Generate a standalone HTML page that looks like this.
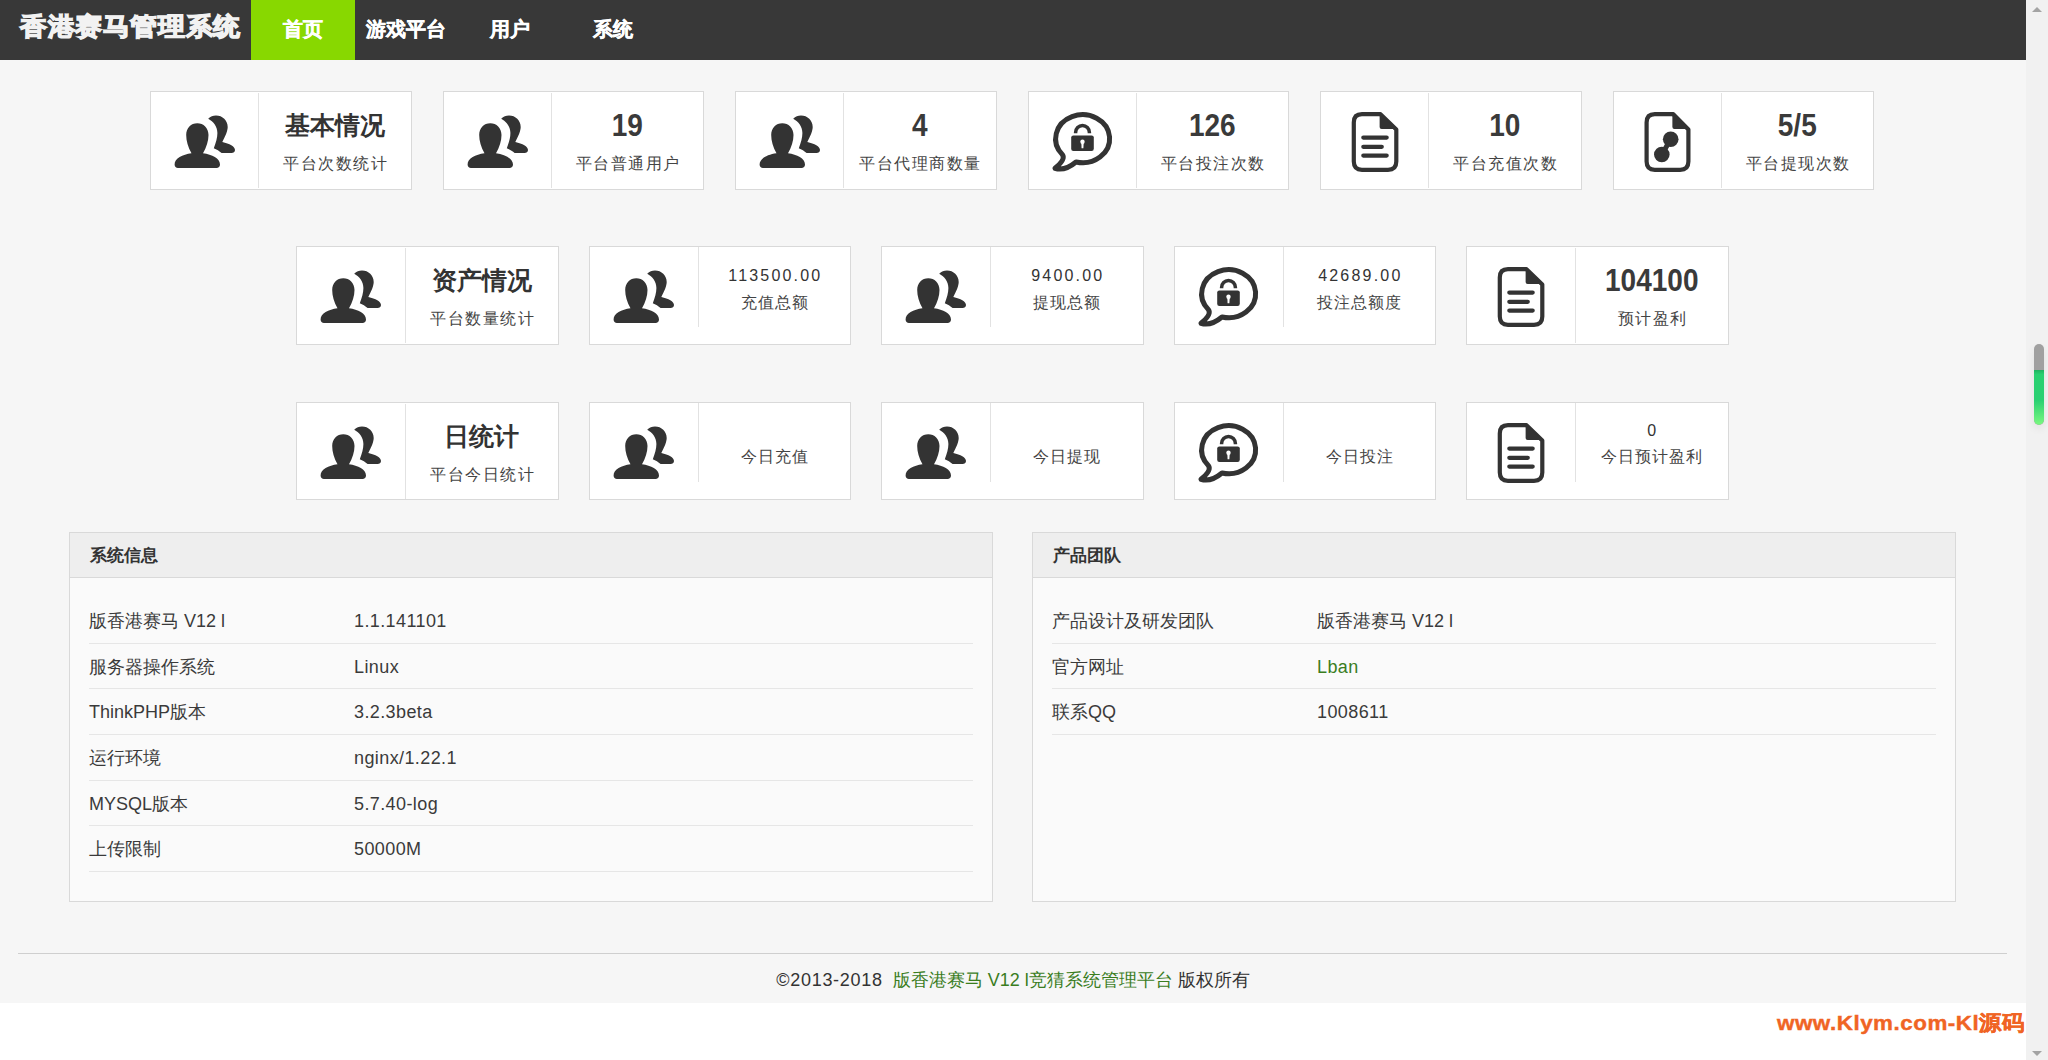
<!DOCTYPE html>
<html><head><meta charset="utf-8">
<style>
*{box-sizing:border-box;margin:0;padding:0}
html,body{width:2048px;height:1060px;overflow:hidden;background:#fff;font-family:"Liberation Sans",sans-serif;color:#333}
#page{position:absolute;left:0;top:0;width:2026px;height:1003px;background:#f6f6f6}
#nav{position:absolute;left:0;top:0;width:2026px;height:60px;background:#383838}
#logo{position:absolute;left:20px;top:6px;font-size:27px;font-weight:900;color:#f0f0f0;letter-spacing:0.6px;line-height:40px;white-space:nowrap;transform:scaleY(0.93);transform-origin:0 30px;-webkit-text-stroke:1.3px #f2f2f2}
.ni{position:absolute;top:0;height:60px;width:104px;text-align:center;line-height:58px;font-size:20px;font-weight:bold;color:#fff;-webkit-text-stroke:0.4px #fff}
.card{position:absolute;width:261.5px;background:#fff;border:1px solid #d9d9d9}
.card .ic{position:absolute;left:14px;top:13px;width:75px;height:75px}
.card .sep{position:absolute;left:107px;top:1px;width:1px;height:95px;background:#e2e2e2}
.card .sep.s{top:0;height:80px}
.card .tx{position:absolute;left:108px;right:0;text-align:center;white-space:nowrap}
.t1{top:17.5px;font-size:25px;font-weight:bold;line-height:30px;color:#333}
.n1{top:18px;font-size:28px;font-weight:bold;line-height:30px;color:#333;transform:scaleY(1.09);color:#3a3a3a;transform-origin:50% 4px}
.st{top:60px;font-size:16px;line-height:24px;letter-spacing:1.5px;color:#444;padding-left:1.5px}
.n2{top:19px;font-size:16px;line-height:20px;letter-spacing:2.2px;color:#333;padding-left:2.2px}
.l2{top:44px;font-size:16px;line-height:24px;letter-spacing:1px;color:#444;padding-left:1px}
.panel{position:absolute;top:532px;width:924px;height:370px;border:1px solid #d9d9d9;background:#fafafa}
.ph{position:absolute;left:0;top:0;width:100%;height:45px;background:#eee;border-bottom:1px solid #d9d9d9;font-size:17.2px;font-weight:bold;line-height:45px;padding-left:20px;color:#333}
.row{position:absolute;left:19px;width:884px;height:45.68px;border-bottom:1px solid #e6e6e6;font-size:18px;line-height:46px;color:#3a3a3a;white-space:nowrap}
.row .v{position:absolute;left:265px;top:0}
a{color:#3a7d1e;text-decoration:none}
#hr{position:absolute;left:18px;top:953px;width:1989px;height:1px;background:#cfcfcf}
#foot{position:absolute;left:0;top:966px;width:2026px;text-align:center;font-size:18px;line-height:28px;color:#333;white-space:nowrap}
#wm{position:absolute;left:1777px;top:1008px;font-size:21px;font-weight:bold;color:#f06424;white-space:nowrap;line-height:30px;letter-spacing:0.5px;transform:scaleX(1.065);transform-origin:0 0;-webkit-text-stroke:0.4px #f06424}
#sb{position:absolute;left:2026px;top:0;width:22px;height:1060px;background:#f1f1f1}
#up{position:absolute;left:6px;top:7px;width:0;height:0;border-left:5px solid transparent;border-right:5px solid transparent;border-bottom:5px solid #a3a3a3}
#dn{position:absolute;left:6px;top:1051px;width:0;height:0;border-left:5px solid transparent;border-right:5px solid transparent;border-top:5px solid #a3a3a3}
#th{position:absolute;left:8px;top:344px;width:10px;height:81px;border-radius:5px;background:#a0a0a0;overflow:hidden;box-shadow:0 4px 8px rgba(0,0,0,0.07)}
#thg{position:absolute;left:0;top:26px;width:10px;height:55px;background:linear-gradient(#1fb060,#28d070 8%,#2ad072 55%,#7af880);border-radius:0 0 5px 5px}

.r3 .n2{top:18px}.r3 .l2{top:42px}
.r3 .sep.s{height:79px}

.r2 .sep{left:108px}.r2 .tx{left:109px}

</style></head><body>
<div id="page">
<div id="nav">
<div id="logo">香港赛马管理系统</div>
<div class="ni" style="left:251px;background:#88d800">首页</div>
<div class="ni" style="left:354px">游戏平台</div>
<div class="ni" style="left:458px">用户</div>
<div class="ni" style="left:561px">系统</div>
</div>
<div class="card " style="left:150.0px;top:91px;height:99px;width:261.5px"><svg class="ic" viewBox="0 0 75 75"><path fill="#333" d="M26.5,48.3C23,42 21.2,36 21.2,30C21.2,23 26,18.3 32.3,18.3C38.5,18.3 43.5,23 43.5,30C43.5,36 41.5,42 38,48.3C47,49.5 55,53.5 55,59.5C55,61.5 53.5,63 51.5,63L13,63C11,63 9.6,61.5 9.6,59.5C9.6,53.5 17.5,49.5 26.5,48.3Z"/><path fill="#333" d="M43.2,13.8C45.5,11.8 48,10.6 51,10.6C57.5,10.6 62.7,15.5 62.7,22C62.7,26 60,32 57.3,37C64.5,38.5 70,41.5 70,45C70,46.8 68.5,48.1 66.5,48.1L56.6,48.1C54.5,46 51.5,44.2 48.8,43.2C51,37 52.4,33 52.4,28C52.4,22 48.5,16.5 43.2,13.8Z"/></svg><div class="sep"></div><div class="tx t1">基本情况</div><div class="tx st">平台次数统计</div></div><div class="card " style="left:442.5px;top:91px;height:99px;width:261.5px"><svg class="ic" viewBox="0 0 75 75"><path fill="#333" d="M26.5,48.3C23,42 21.2,36 21.2,30C21.2,23 26,18.3 32.3,18.3C38.5,18.3 43.5,23 43.5,30C43.5,36 41.5,42 38,48.3C47,49.5 55,53.5 55,59.5C55,61.5 53.5,63 51.5,63L13,63C11,63 9.6,61.5 9.6,59.5C9.6,53.5 17.5,49.5 26.5,48.3Z"/><path fill="#333" d="M43.2,13.8C45.5,11.8 48,10.6 51,10.6C57.5,10.6 62.7,15.5 62.7,22C62.7,26 60,32 57.3,37C64.5,38.5 70,41.5 70,45C70,46.8 68.5,48.1 66.5,48.1L56.6,48.1C54.5,46 51.5,44.2 48.8,43.2C51,37 52.4,33 52.4,28C52.4,22 48.5,16.5 43.2,13.8Z"/></svg><div class="sep"></div><div class="tx n1">19</div><div class="tx st">平台普通用户</div></div><div class="card " style="left:735.0px;top:91px;height:99px;width:261.5px"><svg class="ic" viewBox="0 0 75 75"><path fill="#333" d="M26.5,48.3C23,42 21.2,36 21.2,30C21.2,23 26,18.3 32.3,18.3C38.5,18.3 43.5,23 43.5,30C43.5,36 41.5,42 38,48.3C47,49.5 55,53.5 55,59.5C55,61.5 53.5,63 51.5,63L13,63C11,63 9.6,61.5 9.6,59.5C9.6,53.5 17.5,49.5 26.5,48.3Z"/><path fill="#333" d="M43.2,13.8C45.5,11.8 48,10.6 51,10.6C57.5,10.6 62.7,15.5 62.7,22C62.7,26 60,32 57.3,37C64.5,38.5 70,41.5 70,45C70,46.8 68.5,48.1 66.5,48.1L56.6,48.1C54.5,46 51.5,44.2 48.8,43.2C51,37 52.4,33 52.4,28C52.4,22 48.5,16.5 43.2,13.8Z"/></svg><div class="sep"></div><div class="tx n1">4</div><div class="tx st">平台代理商数量</div></div><div class="card " style="left:1027.5px;top:91px;height:99px;width:261.5px"><svg class="ic" style="left:16.5px" viewBox="0 0 75 75"><path fill="none" stroke="#333" stroke-width="5" stroke-linejoin="round" stroke-linecap="round" d="M31,57A27,24 0 1 0 17.5,49.72C19.8,53 17,57.5 10,63.3C17,65.6 25,62 31,57Z"/><rect x="26.2" y="30.4" width="22.6" height="15.6" rx="2.2" fill="#333"/><path fill="none" stroke="#333" stroke-width="3.5" d="M30.6,28.3V27.4A6.9,6.9 0 0 1 44.4,27.4V28.3"/><circle cx="37.5" cy="36.8" r="2.2" fill="#fff"/><path fill="#fff" d="M36.3,37.5L38.7,37.5L38.4,43.2L36.6,43.2Z"/></svg><div class="sep"></div><div class="tx n1">126</div><div class="tx st">平台投注次数</div></div><div class="card " style="left:1320.0px;top:91px;height:99px;width:261.5px"><svg class="ic" style="left:19px" viewBox="0 0 75 75"><path fill="none" stroke="#333" stroke-width="4.2" stroke-linejoin="round" d="M13.8,17.5Q13.8,9.2 22,9.2L40.5,9.2L56.3,24.5L56.3,56.5Q56.3,64.8 48,64.8L22,64.8Q13.8,64.8 13.8,56.5Z"/><path fill="#333" d="M39.6,9.2L39.6,22Q39.6,24 41.6,24L56.3,24Z"/><path stroke="#333" stroke-width="4.2" stroke-linecap="round" d="M23.3,32.6H46.7M23.3,41.8H41.8M23.3,50.6H46.7"/></svg><div class="sep"></div><div class="tx n1">10</div><div class="tx st">平台充值次数</div></div><div class="card " style="left:1612.5px;top:91px;height:99px;width:261.5px"><svg class="ic" style="left:16.5px" viewBox="0 0 75 75"><path fill="none" stroke="#333" stroke-width="4.2" stroke-linejoin="round" d="M16.6,17.5Q16.6,9.2 24.8,9.2L43.3,9.2L58.4,24.5L58.4,56.5Q58.4,64.8 50.1,64.8L24.8,64.8Q16.6,64.8 16.6,56.5Z"/><path fill="#333" d="M42.4,9.2L42.4,22Q42.4,24 44.4,24L58.4,24Z"/><circle cx="40.7" cy="34.3" r="7.8" fill="#333"/><circle cx="31.8" cy="49.5" r="7.8" fill="#333"/><path stroke="#333" stroke-width="5" d="M40.7,34.3L31.8,49.5"/></svg><div class="sep"></div><div class="tx n1">5/5</div><div class="tx st">平台提现次数</div></div><div class="card r2" style="left:296.0px;top:246px;height:99px;width:262.5px"><svg class="ic" viewBox="0 0 75 75"><path fill="#333" d="M26.5,48.3C23,42 21.2,36 21.2,30C21.2,23 26,18.3 32.3,18.3C38.5,18.3 43.5,23 43.5,30C43.5,36 41.5,42 38,48.3C47,49.5 55,53.5 55,59.5C55,61.5 53.5,63 51.5,63L13,63C11,63 9.6,61.5 9.6,59.5C9.6,53.5 17.5,49.5 26.5,48.3Z"/><path fill="#333" d="M43.2,13.8C45.5,11.8 48,10.6 51,10.6C57.5,10.6 62.7,15.5 62.7,22C62.7,26 60,32 57.3,37C64.5,38.5 70,41.5 70,45C70,46.8 68.5,48.1 66.5,48.1L56.6,48.1C54.5,46 51.5,44.2 48.8,43.2C51,37 52.4,33 52.4,28C52.4,22 48.5,16.5 43.2,13.8Z"/></svg><div class="sep"></div><div class="tx t1">资产情况</div><div class="tx st">平台数量统计</div></div><div class="card r2" style="left:588.5px;top:246px;height:99px;width:262.5px"><svg class="ic" viewBox="0 0 75 75"><path fill="#333" d="M26.5,48.3C23,42 21.2,36 21.2,30C21.2,23 26,18.3 32.3,18.3C38.5,18.3 43.5,23 43.5,30C43.5,36 41.5,42 38,48.3C47,49.5 55,53.5 55,59.5C55,61.5 53.5,63 51.5,63L13,63C11,63 9.6,61.5 9.6,59.5C9.6,53.5 17.5,49.5 26.5,48.3Z"/><path fill="#333" d="M43.2,13.8C45.5,11.8 48,10.6 51,10.6C57.5,10.6 62.7,15.5 62.7,22C62.7,26 60,32 57.3,37C64.5,38.5 70,41.5 70,45C70,46.8 68.5,48.1 66.5,48.1L56.6,48.1C54.5,46 51.5,44.2 48.8,43.2C51,37 52.4,33 52.4,28C52.4,22 48.5,16.5 43.2,13.8Z"/></svg><div class="sep s"></div><div class="tx n2">113500.00</div><div class="tx l2">充值总额</div></div><div class="card r2" style="left:881.0px;top:246px;height:99px;width:262.5px"><svg class="ic" viewBox="0 0 75 75"><path fill="#333" d="M26.5,48.3C23,42 21.2,36 21.2,30C21.2,23 26,18.3 32.3,18.3C38.5,18.3 43.5,23 43.5,30C43.5,36 41.5,42 38,48.3C47,49.5 55,53.5 55,59.5C55,61.5 53.5,63 51.5,63L13,63C11,63 9.6,61.5 9.6,59.5C9.6,53.5 17.5,49.5 26.5,48.3Z"/><path fill="#333" d="M43.2,13.8C45.5,11.8 48,10.6 51,10.6C57.5,10.6 62.7,15.5 62.7,22C62.7,26 60,32 57.3,37C64.5,38.5 70,41.5 70,45C70,46.8 68.5,48.1 66.5,48.1L56.6,48.1C54.5,46 51.5,44.2 48.8,43.2C51,37 52.4,33 52.4,28C52.4,22 48.5,16.5 43.2,13.8Z"/></svg><div class="sep s"></div><div class="tx n2">9400.00</div><div class="tx l2">提现总额</div></div><div class="card r2" style="left:1173.5px;top:246px;height:99px;width:262.5px"><svg class="ic" style="left:16.5px" viewBox="0 0 75 75"><path fill="none" stroke="#333" stroke-width="5" stroke-linejoin="round" stroke-linecap="round" d="M31,57A27,24 0 1 0 17.5,49.72C19.8,53 17,57.5 10,63.3C17,65.6 25,62 31,57Z"/><rect x="26.2" y="30.4" width="22.6" height="15.6" rx="2.2" fill="#333"/><path fill="none" stroke="#333" stroke-width="3.5" d="M30.6,28.3V27.4A6.9,6.9 0 0 1 44.4,27.4V28.3"/><circle cx="37.5" cy="36.8" r="2.2" fill="#fff"/><path fill="#fff" d="M36.3,37.5L38.7,37.5L38.4,43.2L36.6,43.2Z"/></svg><div class="sep s"></div><div class="tx n2">42689.00</div><div class="tx l2">投注总额度</div></div><div class="card r2" style="left:1466.0px;top:246px;height:99px;width:262.5px"><svg class="ic" style="left:19px" viewBox="0 0 75 75"><path fill="none" stroke="#333" stroke-width="4.2" stroke-linejoin="round" d="M13.8,17.5Q13.8,9.2 22,9.2L40.5,9.2L56.3,24.5L56.3,56.5Q56.3,64.8 48,64.8L22,64.8Q13.8,64.8 13.8,56.5Z"/><path fill="#333" d="M39.6,9.2L39.6,22Q39.6,24 41.6,24L56.3,24Z"/><path stroke="#333" stroke-width="4.2" stroke-linecap="round" d="M23.3,32.6H46.7M23.3,41.8H41.8M23.3,50.6H46.7"/></svg><div class="sep"></div><div class="tx n1">104100</div><div class="tx st">预计盈利</div></div><div class="card r2 r3" style="left:296.0px;top:402px;height:98px;width:262.5px"><svg class="ic" viewBox="0 0 75 75"><path fill="#333" d="M26.5,48.3C23,42 21.2,36 21.2,30C21.2,23 26,18.3 32.3,18.3C38.5,18.3 43.5,23 43.5,30C43.5,36 41.5,42 38,48.3C47,49.5 55,53.5 55,59.5C55,61.5 53.5,63 51.5,63L13,63C11,63 9.6,61.5 9.6,59.5C9.6,53.5 17.5,49.5 26.5,48.3Z"/><path fill="#333" d="M43.2,13.8C45.5,11.8 48,10.6 51,10.6C57.5,10.6 62.7,15.5 62.7,22C62.7,26 60,32 57.3,37C64.5,38.5 70,41.5 70,45C70,46.8 68.5,48.1 66.5,48.1L56.6,48.1C54.5,46 51.5,44.2 48.8,43.2C51,37 52.4,33 52.4,28C52.4,22 48.5,16.5 43.2,13.8Z"/></svg><div class="sep"></div><div class="tx t1">日统计</div><div class="tx st">平台今日统计</div></div><div class="card r2 r3" style="left:588.5px;top:402px;height:98px;width:262.5px"><svg class="ic" viewBox="0 0 75 75"><path fill="#333" d="M26.5,48.3C23,42 21.2,36 21.2,30C21.2,23 26,18.3 32.3,18.3C38.5,18.3 43.5,23 43.5,30C43.5,36 41.5,42 38,48.3C47,49.5 55,53.5 55,59.5C55,61.5 53.5,63 51.5,63L13,63C11,63 9.6,61.5 9.6,59.5C9.6,53.5 17.5,49.5 26.5,48.3Z"/><path fill="#333" d="M43.2,13.8C45.5,11.8 48,10.6 51,10.6C57.5,10.6 62.7,15.5 62.7,22C62.7,26 60,32 57.3,37C64.5,38.5 70,41.5 70,45C70,46.8 68.5,48.1 66.5,48.1L56.6,48.1C54.5,46 51.5,44.2 48.8,43.2C51,37 52.4,33 52.4,28C52.4,22 48.5,16.5 43.2,13.8Z"/></svg><div class="sep s"></div><div class="tx l2">今日充值</div></div><div class="card r2 r3" style="left:881.0px;top:402px;height:98px;width:262.5px"><svg class="ic" viewBox="0 0 75 75"><path fill="#333" d="M26.5,48.3C23,42 21.2,36 21.2,30C21.2,23 26,18.3 32.3,18.3C38.5,18.3 43.5,23 43.5,30C43.5,36 41.5,42 38,48.3C47,49.5 55,53.5 55,59.5C55,61.5 53.5,63 51.5,63L13,63C11,63 9.6,61.5 9.6,59.5C9.6,53.5 17.5,49.5 26.5,48.3Z"/><path fill="#333" d="M43.2,13.8C45.5,11.8 48,10.6 51,10.6C57.5,10.6 62.7,15.5 62.7,22C62.7,26 60,32 57.3,37C64.5,38.5 70,41.5 70,45C70,46.8 68.5,48.1 66.5,48.1L56.6,48.1C54.5,46 51.5,44.2 48.8,43.2C51,37 52.4,33 52.4,28C52.4,22 48.5,16.5 43.2,13.8Z"/></svg><div class="sep s"></div><div class="tx l2">今日提现</div></div><div class="card r2 r3" style="left:1173.5px;top:402px;height:98px;width:262.5px"><svg class="ic" style="left:16.5px" viewBox="0 0 75 75"><path fill="none" stroke="#333" stroke-width="5" stroke-linejoin="round" stroke-linecap="round" d="M31,57A27,24 0 1 0 17.5,49.72C19.8,53 17,57.5 10,63.3C17,65.6 25,62 31,57Z"/><rect x="26.2" y="30.4" width="22.6" height="15.6" rx="2.2" fill="#333"/><path fill="none" stroke="#333" stroke-width="3.5" d="M30.6,28.3V27.4A6.9,6.9 0 0 1 44.4,27.4V28.3"/><circle cx="37.5" cy="36.8" r="2.2" fill="#fff"/><path fill="#fff" d="M36.3,37.5L38.7,37.5L38.4,43.2L36.6,43.2Z"/></svg><div class="sep s"></div><div class="tx l2">今日投注</div></div><div class="card r2 r3" style="left:1466.0px;top:402px;height:98px;width:262.5px"><svg class="ic" style="left:19px" viewBox="0 0 75 75"><path fill="none" stroke="#333" stroke-width="4.2" stroke-linejoin="round" d="M13.8,17.5Q13.8,9.2 22,9.2L40.5,9.2L56.3,24.5L56.3,56.5Q56.3,64.8 48,64.8L22,64.8Q13.8,64.8 13.8,56.5Z"/><path fill="#333" d="M39.6,9.2L39.6,22Q39.6,24 41.6,24L56.3,24Z"/><path stroke="#333" stroke-width="4.2" stroke-linecap="round" d="M23.3,32.6H46.7M23.3,41.8H41.8M23.3,50.6H46.7"/></svg><div class="sep s"></div><div class="tx n2">0</div><div class="tx l2">今日预计盈利</div></div>
<div class="panel" style="left:69px"><div class="ph">系统信息</div><div class="row" style="top:65.00px">版香港赛马 V12 l<span class="v" style="letter-spacing:0.4px">1.1.141101</span></div><div class="row" style="top:110.68px">服务器操作系统<span class="v" style="letter-spacing:0.4px">Linux</span></div><div class="row" style="top:156.36px">ThinkPHP版本<span class="v" style="letter-spacing:0.4px">3.2.3beta</span></div><div class="row" style="top:202.04px">运行环境<span class="v" style="letter-spacing:0.4px">nginx/1.22.1</span></div><div class="row" style="top:247.72px">MYSQL版本<span class="v" style="letter-spacing:0.4px">5.7.40-log</span></div><div class="row" style="top:293.40px">上传限制<span class="v" style="letter-spacing:0.4px">50000M</span></div></div>
<div class="panel" style="left:1032px"><div class="ph">产品团队</div><div class="row" style="top:65.00px">产品设计及研发团队<span class="v">版香港赛马 V12 l</span></div><div class="row" style="top:110.68px">官方网址<span class="v" style="letter-spacing:0.4px"><a>Lban</a></span></div><div class="row" style="top:156.36px">联系QQ<span class="v" style="letter-spacing:0.4px">1008611</span></div></div>
<div id="hr"></div>
<div id="foot"><span style="letter-spacing:0.7px">©2013-2018</span>&nbsp; <a>版香港赛马 V12 l竞猜系统管理平台</a> 版权所有</div>
</div>
<div id="wm">www.Klym.com-Kl源码</div>
<div id="sb"><div id="up"></div><div id="dn"></div><div id="th"><div id="thg"></div></div></div>
</body></html>
